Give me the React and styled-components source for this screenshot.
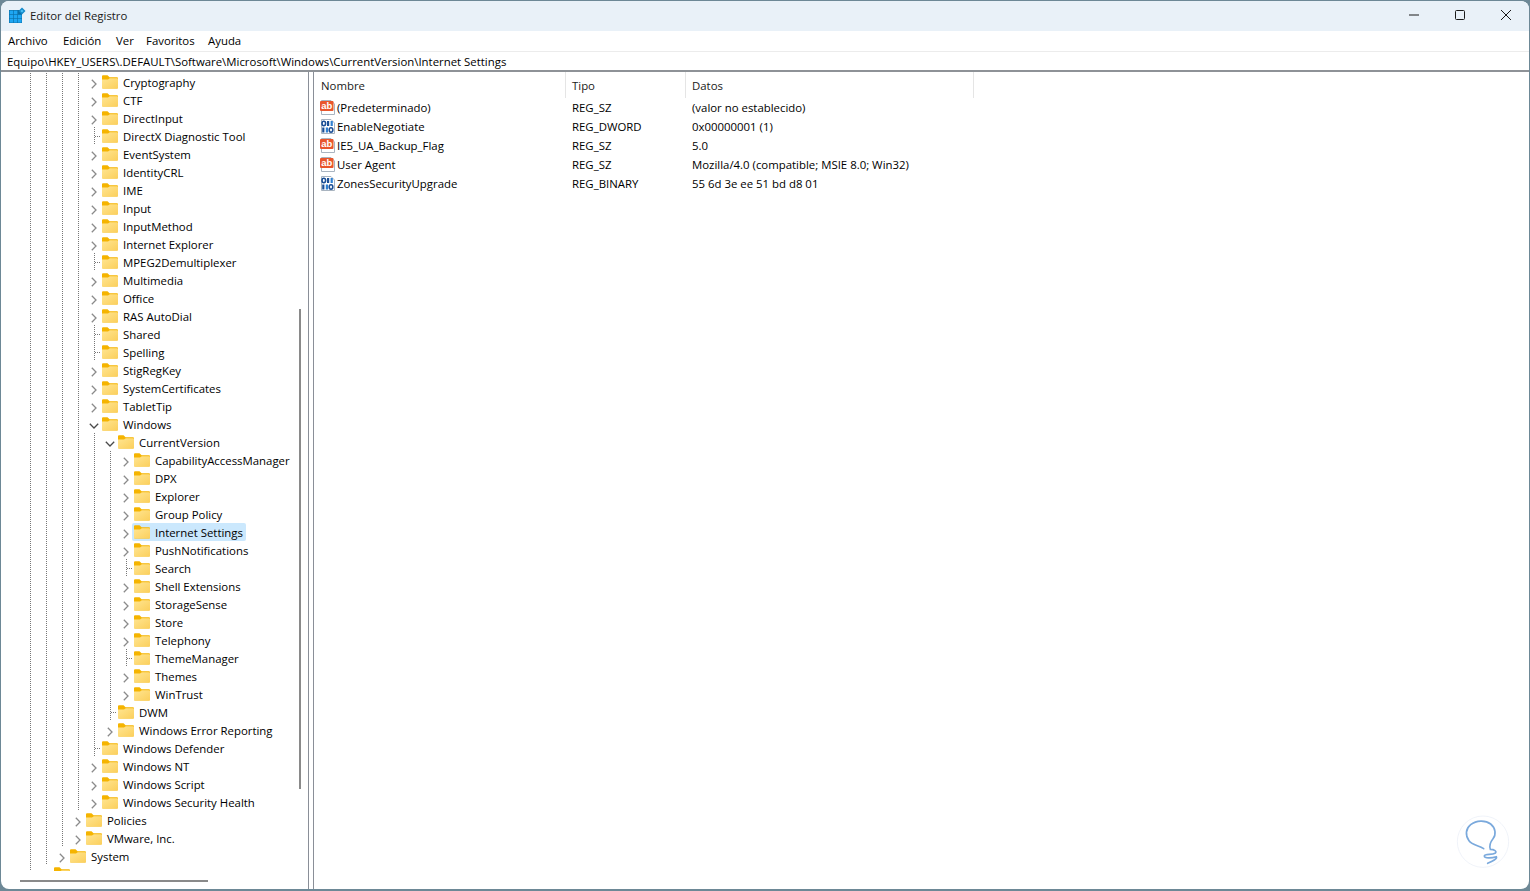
import React from "react";
import styled, { createGlobalStyle } from "styled-components";

const FONT = `"Open Sans", "Noto Sans", "Liberation Sans", sans-serif`;

const GlobalStyle = createGlobalStyle`
  html, body { margin: 0; padding: 0; height: 100%; overflow: hidden; background: #6d8896; }
  #root { height: 100%; }
  * { box-sizing: border-box; }
`;

// d = number of dotted guide cells before the chevron cell
const treeRows = [
  { name: "Cryptography", d: 4 },
  { name: "CTF", d: 4 },
  { name: "DirectInput", d: 4 },
  { name: "DirectX Diagnostic Tool", d: 4, leaf: true },
  { name: "EventSystem", d: 4 },
  { name: "IdentityCRL", d: 4 },
  { name: "IME", d: 4 },
  { name: "Input", d: 4 },
  { name: "InputMethod", d: 4 },
  { name: "Internet Explorer", d: 4 },
  { name: "MPEG2Demultiplexer", d: 4, leaf: true },
  { name: "Multimedia", d: 4 },
  { name: "Office", d: 4 },
  { name: "RAS AutoDial", d: 4 },
  { name: "Shared", d: 4, leaf: true },
  { name: "Spelling", d: 4, leaf: true },
  { name: "StigRegKey", d: 4 },
  { name: "SystemCertificates", d: 4 },
  { name: "TabletTip", d: 4 },
  { name: "Windows", d: 4, open: true },
  { name: "CurrentVersion", d: 5, open: true },
  { name: "CapabilityAccessManager", d: 6 },
  { name: "DPX", d: 6 },
  { name: "Explorer", d: 6 },
  { name: "Group Policy", d: 6 },
  { name: "Internet Settings", d: 6, selected: true },
  { name: "PushNotifications", d: 6 },
  { name: "Search", d: 6, leaf: true },
  { name: "Shell Extensions", d: 6 },
  { name: "StorageSense", d: 6 },
  { name: "Store", d: 6 },
  { name: "Telephony", d: 6 },
  { name: "ThemeManager", d: 6, leaf: true },
  { name: "Themes", d: 6 },
  { name: "WinTrust", d: 6 },
  { name: "DWM", d: 5, leaf: true },
  { name: "Windows Error Reporting", d: 5 },
  { name: "Windows Defender", d: 4, leaf: true },
  { name: "Windows NT", d: 4 },
  { name: "Windows Script", d: 4 },
  { name: "Windows Security Health", d: 4 },
  { name: "Policies", d: 3 },
  { name: "VMware, Inc.", d: 3 },
  { name: "System", d: 2 },
  { name: "S-1-5-18", d: 1 },
];

const values = [
  { name: "(Predeterminado)", type: "REG_SZ", data: "(valor no establecido)", icon: "text" },
  { name: "EnableNegotiate", type: "REG_DWORD", data: "0x00000001 (1)", icon: "binary" },
  { name: "IE5_UA_Backup_Flag", type: "REG_SZ", data: "5.0", icon: "text" },
  { name: "User Agent", type: "REG_SZ", data: "Mozilla/4.0 (compatible; MSIE 8.0; Win32)", icon: "text" },
  { name: "ZonesSecurityUpgrade", type: "REG_BINARY", data: "55 6d 3e ee 51 bd d8 01", icon: "binary" },
];

const menus = [
  { label: "Archivo", width: 41 },
  { label: "Edición", width: 39 },
  { label: "Ver", width: 16 },
  { label: "Favoritos", width: 48 },
  { label: "Ayuda", width: 34 },
];
const columns = [
  { label: "Nombre", width: 252 },
  { label: "Tipo", width: 120 },
  { label: "Datos", width: 288 },
];

const RegeditIcon = () => (
  <svg width="18" height="17" viewBox="0 0 18 17">
    <rect x="1" y="3" width="13" height="13" fill="#0b6ea6" />
    {[0, 1, 2].map((r) =>
      [0, 1, 2].map((c) => (
        <rect key={`${r}${c}`} x={1.6 + c * 4.2} y={3.6 + r * 4.2} width="3.6" height="3.6" fill={r === 0 && c === 2 ? "#0b6ea6" : "#1ea6f2"} />
      ))
    )}
    <path d="M14 0.5 L17.5 4 L14 7.5 L10.5 4 Z" fill="#1489c9" />
    <path d="M14 2.4 L15.6 4 L14 5.6 L12.4 4 Z" fill="#4cc2f7" />
  </svg>
);

const FolderIcon = () => (
  <svg width="16" height="14" viewBox="0 0 16 14">
    <defs>
      <linearGradient id="folderFront" x1="0" y1="0" x2="1" y2="1">
        <stop offset="0" stopColor="#ffe591" />
        <stop offset="1" stopColor="#fbcf5c" />
      </linearGradient>
    </defs>
    <path d="M0 1.2 Q0 0.3 1 0.3 H5.5 L7.6 2.3 H15 Q16 2.3 16 3.3 V12.6 Q16 13.6 15 13.6 H1 Q0 13.6 0 12.6 Z" fill="#f5b400" />
    <path d="M0 4.4 H6 L7.8 3.2 H15.2 Q16 3.2 16 4 V12.7 Q16 13.6 15 13.6 H1 Q0 13.6 0 12.7 Z" fill="url(#folderFront)" />
  </svg>
);

const Chevron = ({ open }) => (
  <svg width="10" height="10" viewBox="0 0 10 10">
    {open ? (
      <path d="M0.8 2.8 L5 7 L9.2 2.8" fill="none" stroke="#4a4a4a" strokeWidth="1.3" />
    ) : (
      <path d="M2.8 0.8 L7 5 L2.8 9.2" fill="none" stroke="#8a8a8a" strokeWidth="1.3" />
    )}
  </svg>
);

const ValueIcon = ({ kind }) => (
  <svg width="15" height="15" viewBox="0 0 15 15">
    <path d="M1.5 0.5 H11 L14.5 4 V14.5 H1.5 Z" fill="#fff" stroke="#a9b4c0" strokeWidth="1" />
    {kind === "text" ? (
      <>
        <rect x="0" y="1" width="13.5" height="10" rx="1" fill="#e9562c" />
        <text x="6.7" y="8.9" textAnchor="middle" fontSize="9.5" fontWeight="700" fontFamily="Liberation Sans, sans-serif" fill="#fff">ab</text>
      </>
    ) : (
      <>
        <ellipse cx="3.8" cy="4.5" rx="1.8" ry="2.2" fill="none" stroke="#1b4f96" strokeWidth="1.6" />
        <rect x="7" y="2" width="2.2" height="5" fill="#1b4f96" />
        <rect x="10.6" y="2" width="2.2" height="5" fill="#2f7fd0" />
        <rect x="2.2" y="8.5" width="2.2" height="5" fill="#1b4f96" />
        <rect x="5.8" y="8.5" width="2.2" height="5" fill="#2f7fd0" />
        <ellipse cx="11" cy="11" rx="1.8" ry="2.2" fill="none" stroke="#1b4f96" strokeWidth="1.6" />
      </>
    )}
  </svg>
);

const App = () => (
  <Desktop>
    <GlobalStyle />
    <Window>
      <TitleBar>
        <TitleIcon><RegeditIcon /></TitleIcon>
        <TitleText>Editor del Registro</TitleText>
        <WindowControls>
          <ControlButton>
            <svg width="12" height="12" viewBox="0 0 12 12"><path d="M1 6 H11" stroke="#1a1a1a" strokeWidth="1" /></svg>
          </ControlButton>
          <ControlButton>
            <svg width="12" height="12" viewBox="0 0 12 12"><rect x="1.5" y="1.5" width="9" height="9" rx="1" fill="none" stroke="#1a1a1a" strokeWidth="1" /></svg>
          </ControlButton>
          <ControlButton>
            <svg width="12" height="12" viewBox="0 0 12 12"><path d="M1 1 L11 11 M11 1 L1 11" stroke="#1a1a1a" strokeWidth="1" /></svg>
          </ControlButton>
        </WindowControls>
      </TitleBar>
      <MenuBar>
        {menus.map((m) => (
          <MenuItem key={m.label} $width={m.width}>{m.label}</MenuItem>
        ))}
      </MenuBar>
      <AddressBar>Equipo\HKEY_USERS\.DEFAULT\Software\Microsoft\Windows\CurrentVersion\Internet Settings</AddressBar>
      <Content>
        <TreePane>
          <TreeViewport>
            {treeRows.map((row) => (
              <TreeRow key={row.name}>
                {Array.from({ length: row.d }).map((_, i) => (
                  <GuideCell key={i} />
                ))}
                {row.leaf ? (
                  <LeafCell />
                ) : (
                  <ChevronCell><Chevron open={row.open} /></ChevronCell>
                )}
                <TreeItem $selected={row.selected}>
                  <FolderIcon />
                  <TreeLabel>{row.name}</TreeLabel>
                </TreeItem>
              </TreeRow>
            ))}
          </TreeViewport>
          <VTrack><VThumb /></VTrack>
          <HTrack><HThumb /></HTrack>
        </TreePane>
        <Splitter />
        <ListPane>
          <ListHeader>
            {columns.map((c) => (
              <HeaderCell key={c.label} $width={c.width}>{c.label}</HeaderCell>
            ))}
          </ListHeader>
          {values.map((v) => (
            <ValueRow key={v.name}>
              <NameCell>
                <ValueIcon kind={v.icon} />
                <span>{v.name}</span>
              </NameCell>
              <TypeCell>{v.type}</TypeCell>
              <DataCell>{v.data}</DataCell>
            </ValueRow>
          ))}
          <Watermark>
            <svg width="90" height="81" viewBox="0 0 270 243">
              <circle cx="132" cy="101" r="77" fill="#fff" stroke="#e8edf6" strokeWidth="2" />
              <path
                d="M134 122 C120 112 100 112 90 98 C78 82 80 62 95 50 C112 36 140 36 155 48 C170 60 172 80 162 92 C154 102 150 112 154 124 C165 124 176 130 168 136 C158 142 138 136 136 144 C136 152 160 150 172 146 C176 152 160 160 146 166"
                fill="none"
                stroke="#7aa9dc"
                strokeWidth="5"
                strokeLinecap="round"
              />
            </svg>
          </Watermark>
        </ListPane>
      </Content>
    </Window>
  </Desktop>
);

export default App;

const Desktop = styled.div`
  height: 100%;
  padding: 1px 1px 2px 1px;
`;

const Window = styled.div`
  height: 100%;
  display: flex;
  flex-direction: column;
  background: #fff;
  border-radius: 8px;
  overflow: hidden;
  font-family: ${FONT};
  font-size: 11.4px;
  color: #000;
`;

const TitleBar = styled.div`
  height: 30px;
  flex: none;
  display: flex;
  align-items: center;
  background: #e9f1f8;
  padding: 0 0 2px 7px;
`;

const TitleIcon = styled.div`
  width: 22px;
  height: 17px;
  display: flex;
`;

const TitleText = styled.span`
  color: #1a1a1a;
`;

const WindowControls = styled.div`
  margin-left: auto;
  display: flex;
`;

const ControlButton = styled.div`
  width: 46px;
  height: 28px;
  display: flex;
  align-items: center;
  justify-content: center;
`;

const MenuBar = styled.div`
  height: 20px;
  flex: none;
  display: flex;
  align-items: center;
  gap: 14px;
  padding: 0 0 1px 7px;
  background: #fff;
`;

const MenuItem = styled.span`
  width: ${(p) => p.$width}px;
`;

const AddressBar = styled.div`
  height: 21px;
  flex: none;
  display: flex;
  align-items: center;
  padding-left: 6px;
  border-top: 1px solid #ececec;
  border-bottom: 2px solid #8e9297;
`;

const Content = styled.div`
  flex: 1;
  min-height: 0;
  display: flex;
`;

const TreePane = styled.div`
  width: 308px;
  flex: none;
  display: grid;
  grid-template-columns: 290px 1fr;
  grid-template-rows: 1fr 18px;
  border-right: 1px solid #8a8f98;
  min-height: 0;
`;

const TreeViewport = styled.div`
  grid-column: 1;
  grid-row: 1;
  overflow: hidden;
  padding: 1px 0 0 22px;
  min-height: 0;
`;

const TreeRow = styled.div`
  height: 18px;
  display: flex;
  align-items: stretch;
  white-space: nowrap;
`;

const GuideCell = styled.div`
  width: 16px;
  flex: none;
  background-image: linear-gradient(to bottom, #777 50%, transparent 50%);
  background-size: 1px 2px;
  background-repeat: repeat-y;
  background-position: 7px 0;
`;

const LeafCell = styled(GuideCell)`
  position: relative;
  &::after {
    content: "";
    position: absolute;
    left: 8px;
    top: 9px;
    width: 6px;
    height: 1px;
    background-image: linear-gradient(to right, #777 50%, transparent 50%);
    background-size: 2px 1px;
  }
`;

const ChevronCell = styled.div`
  width: 16px;
  flex: none;
  display: flex;
  align-items: center;
  justify-content: center;
  padding: 3px 2px 0 0;
`;

const TreeItem = styled.div`
  display: flex;
  align-items: center;
  gap: 5px;
  padding: 0 3px 0 2px;
  margin-left: -3px;
  border-radius: 2px;
  background: ${(p) => (p.$selected ? "#cbe8fd" : "transparent")};
`;

const TreeLabel = styled.span``;

const VTrack = styled.div`
  grid-column: 2;
  grid-row: 1 / span 2;
  padding: 237px 0 0 8px;
`;

const VThumb = styled.div`
  width: 2px;
  height: 480px;
  background: #8a8a8a;
`;

const HTrack = styled.div`
  grid-column: 1;
  grid-row: 2;
  padding: 9px 0 0 19px;
`;

const HThumb = styled.div`
  width: 188px;
  height: 2px;
  background: #8a8a8a;
`;

const Splitter = styled.div`
  width: 4px;
  flex: none;
`;

const ListPane = styled.div`
  flex: 1;
  min-width: 0;
  position: relative;
  border-left: 1px solid #8a8f98;
`;

const ListHeader = styled.div`
  height: 26px;
  display: flex;
`;

const HeaderCell = styled.div`
  width: ${(p) => p.$width}px;
  padding-left: 6px;
  display: flex;
  align-items: center;
  border-right: 1px solid #e5e5e5;
  color: #1a1a1a;
  &:first-child { padding-left: 7px; }
`;

const ValueRow = styled.div`
  height: 19px;
  display: flex;
  align-items: center;
`;

const NameCell = styled.div`
  width: 252px;
  padding-left: 6px;
  display: flex;
  align-items: center;
  gap: 2px;
`;

const TypeCell = styled.div`
  width: 120px;
  padding-left: 6px;
`;

const DataCell = styled.div`
  padding-left: 6px;
`;

const Watermark = styled.div`
  position: absolute;
  right: 0;
  bottom: 0;
  line-height: 0;
`;
